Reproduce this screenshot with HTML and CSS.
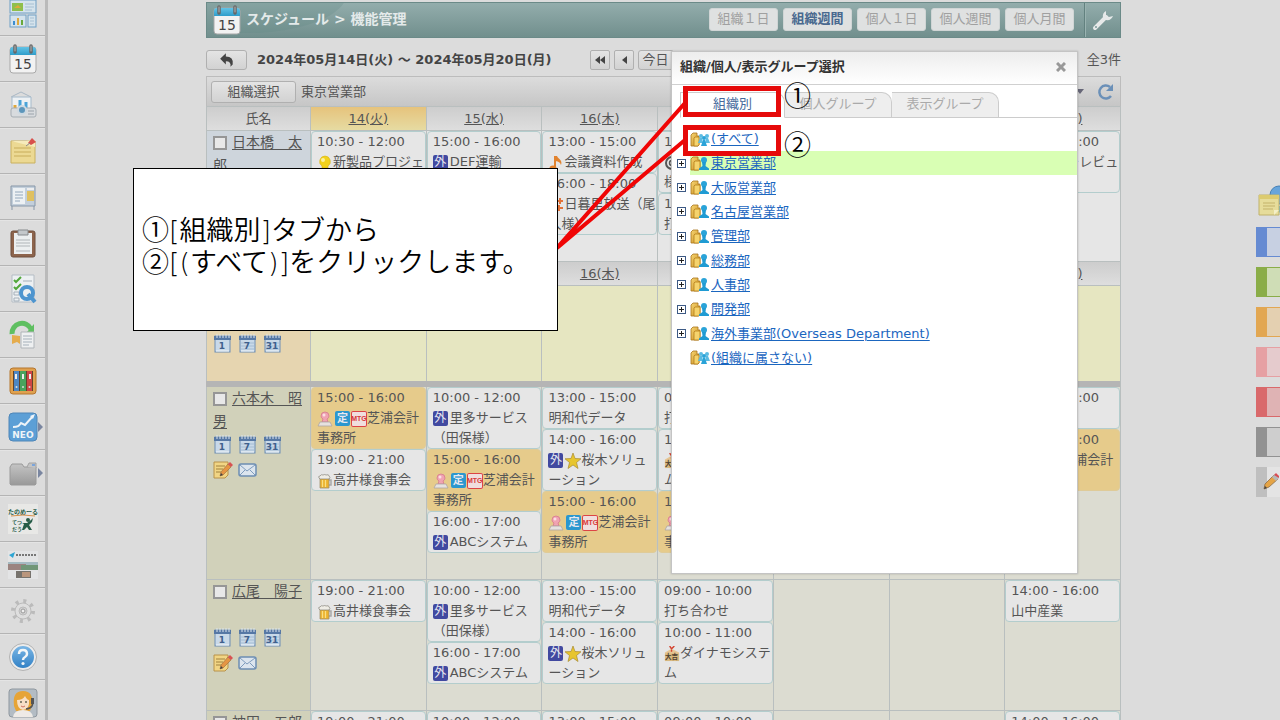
FILE: index.html
```html
<!DOCTYPE html>
<html lang="ja">
<head>
<meta charset="utf-8">
<title>スケジュール</title>
<link rel="stylesheet" href="styles.css">
</head>
<body>
<svg class="paints" aria-hidden="true">
  <defs>
    <linearGradient id="g-blue" x1="0" y1="0" x2="0" y2="1"><stop offset="0" stop-color="#7db8e6"/><stop offset="1" stop-color="#2f7fc4"/></linearGradient>
    <linearGradient id="g-sky" x1="0" y1="0" x2="0" y2="1"><stop offset="0" stop-color="#63c3e6"/><stop offset="1" stop-color="#2f9dca"/></linearGradient>
    <linearGradient id="g-gray" x1="0" y1="0" x2="0" y2="1"><stop offset="0" stop-color="#c4c4c4"/><stop offset="1" stop-color="#999"/></linearGradient>
    <linearGradient id="g-gold" x1="0" y1="0" x2="1" y2="1"><stop offset="0" stop-color="#f7d774"/><stop offset="1" stop-color="#c98a1c"/></linearGradient>
  </defs>
</svg>
<svg class="defs" aria-hidden="true">
  <symbol id="day" viewBox="0 0 28 30">
    <rect x="1" y="3" width="26" height="26" rx="3" fill="#f2f2f2" stroke="#a9a9a9"/>
    <path d="M1 11V6a3 3 0 0 1 3-3h20a3 3 0 0 1 3 3v5z" fill="url(#g-sky)"/>
    <path d="M6 2v6M22 2v6" stroke="#666" stroke-width="3.500" stroke-linecap="round"/><path d="M6 2v5M22 2v5" stroke="#b5b5b5" stroke-linecap="round"/>
    <text x="14" y="25" text-anchor="middle" font-size="14" fill="#444">15</text>
  </symbol>
  <symbol id="calbase" viewBox="0 0 17 19">
    <rect x="1" y="2" width="15" height="16" fill="#c9d9e8" stroke="#6c8db3"/>
    <path d="M0 2h17v4H0z" fill="#5678a5"/><path d="M3 0v4M6 0v4M9 0v4M12 0v4M15 0v4" stroke="#dbe4ee"/><path d="M2 17h13" stroke="#f0f5f8"/>
  </symbol>
  <symbol id="cal1" viewBox="0 0 17 19"><use href="#calbase"/><text x="8" y="15" text-anchor="middle" font-size="9" font-weight="bold" fill="#3f608d">1</text></symbol>
  <symbol id="cal7" viewBox="0 0 17 19"><use href="#calbase"/><path d="M2 9h13M2 12h13M2 15h13" stroke="#a5bdd4"/><text x="8" y="15" text-anchor="middle" font-size="9" font-weight="bold" fill="#3f608d">7</text></symbol>
  <symbol id="cal31" viewBox="0 0 17 19"><use href="#calbase"/><path d="M2 9h13M2 12h13M2 15h13" stroke="#a5bdd4"/><text x="8" y="15" text-anchor="middle" font-size="9" font-weight="bold" fill="#3f608d">31</text></symbol>
  <symbol id="memo" viewBox="0 0 20 18">
    <path d="M1 1h14v13l-3 3H1z" fill="#f1d584" stroke="#b8924b"/><path d="M3 5h9M3 8h7M3 11h5" stroke="#a1823f"/>
    <path d="M7 15l1-4 7-8 3 3-8 8z" fill="#e59543" stroke="#9b6a3b" stroke-width=".6"/><path d="M15 3l2-2 3 3-2 2z" fill="#d85252"/><path d="M7 15l1-3 2 2z" fill="#444"/>
  </symbol>
  <symbol id="mail" viewBox="0 0 19 14"><rect x="1" y="1" width="17" height="12" rx="2" fill="#dce5ee" stroke="#6c8db3" stroke-width="1.500"/><path d="M2 2l7 6 8-6M2 12l5-5M17 12l-5-5" fill="none" stroke="#7f9cbd"/></symbol>
  <symbol id="bulb" viewBox="0 0 16 16"><path d="M8 1a5.500 5.500 0 0 0-3 10v2h6v-2a5.500 5.500 0 0 0-3-10z" fill="#f2d21c" stroke="#d5b21b" stroke-width=".6"/><circle cx="6" cy="5" r="2" fill="#fbf1a0"/><path d="M6 13h4v2H6z" fill="#8b8b8b"/></symbol>
  <symbol id="note" viewBox="0 0 16 16"><path d="M7 1v12" stroke="#e2832f" stroke-width="2"/><ellipse cx="5" cy="13" rx="3.500" ry="2.500" fill="#e2832f"/><path d="M6 1h3c1 3 6 4 4 9-1-3-3-4-7-4z" fill="#e2832f"/></symbol>
  <symbol id="plus2" viewBox="0 0 16 16"><path d="M9 4h6M12 1v6M8 11h7M11 8v6M2 3h5M4 1v13" stroke="#e2733a" stroke-width="2"/></symbol>
  <symbol id="target" viewBox="0 0 16 16"><circle cx="8" cy="8" r="6" fill="none" stroke="#555" stroke-width="2"/><circle cx="8" cy="8" r="2.500" fill="none" stroke="#555" stroke-width="1.500"/></symbol>
  <symbol id="seal" viewBox="0 0 16 16"><path d="M4 5a4 4 0 0 1 8 0q0 2-2 3l1 3H5l1-3Q4 7 4 5z" fill="#f0a3b2" stroke="#d67a8e" stroke-width=".8"/><circle cx="7" cy="4" r="1.500" fill="#fbdde3"/><path d="M3 11h10l2 4H1z" fill="#e6e1df" stroke="#aca4a2" stroke-width=".8"/></symbol>
  <symbol id="beer" viewBox="0 0 16 16"><path d="M12 7h2v5h-2" fill="none" stroke="#a9a9a9" stroke-width="1.500"/><path d="M3 5h9v10H3z" fill="#edb22c" stroke="#9f8f6c" stroke-width=".8"/><path d="M5.500 7v7M8.500 7v7" stroke="#f9df84" stroke-width="1.300"/><path d="M2 5q-1-2 1-2 1-2 3-1 2-1 3 0 3-1 3 1 2 1 0 3H3z" fill="#efede6" stroke="#85827a" stroke-width=".7"/></symbol>
  <symbol id="star" viewBox="0 0 16 16"><path d="M8 0l2 5.500 6 .3-4.500 3.700 1.500 6L8 12l-5 3.500 1.500-6L0 5.800l6-.3z" fill="#e7c52e" stroke="#a98b32" stroke-width=".7"/></symbol>
  <symbol id="luck" viewBox="0 0 17 17"><path d="M1 7l7-4 8 4v9H1z" fill="#e6c592"/><path d="M1 8h15v8H1z" fill="#d8b97f"/><path d="M6 0l2 3 3-3M8 3v3" fill="none" stroke="#d44331" stroke-width="1.500"/><text x="8" y="14" text-anchor="middle" font-size="7" font-weight="bold" fill="#4f4131">大吉</text></symbol>
  <symbol id="org" viewBox="0 0 20 15"><path d="M1 3l2-2h5v3h2v9l-2 1H1z" fill="url(#g-gold)" stroke="#a8741c" stroke-width=".8"/><path d="M4 14V6l1-1h5v8l-1 1z" fill="#f5d36c" stroke="#b47d1a" stroke-width=".8"/><circle cx="14" cy="4" r="3" fill="#2aa3d8"/><path d="M12 6h4l-.5 4 3.500 2.500V14H9v-1.500l3.500-2.500z" fill="#1f9bd3"/></symbol>
  <symbol id="orgs" viewBox="0 0 20 15"><path d="M1 3l2-2h4v3h2v9l-1 1H1z" fill="url(#g-gold)" stroke="#a8741c" stroke-width=".8"/><path d="M4 14V6l1-1h4v8l-1 1z" fill="#f5d36c" stroke="#b47d1a" stroke-width=".8"/><g fill="#5bbbe2"><circle cx="11" cy="4" r="2"/><circle cx="17" cy="4" r="2"/><path d="M10 6h2l1 5H8zM16 6h2l2 5h-5z"/></g><circle cx="14" cy="6" r="2" fill="#2aa3d8"/><path d="M13 8h2l2 6h-6z" fill="#2aa3d8"/></symbol>
  <symbol id="pin-note" viewBox="0 0 28 30"><path d="M2 5h24v22H2z" fill="#ecd993" stroke="#c9b05f"/><path d="M2 5h15l9-1v7z" fill="#f6ebbb"/><path d="M5 12h17M5 16h17M5 20h17" stroke="#c8ad5b"/><path d="M19 7l4-5 4 4-5 3z" fill="#d8504c"/><path d="M17 10l4-3" stroke="#888"/></symbol>
</svg>

<div class="page">
  <nav class="side" aria-label="メニュー">
    <a href="#" class="item" aria-label="トップ"><svg width="28" height="32" viewBox="0 0 28 32"><g fill="#d5e3ec" stroke="#6f9fc5"><rect x="1" y="3" width="26" height="13"/><rect x="1" y="18" width="16" height="12"/><rect x="19" y="18" width="8" height="12"/></g><path d="M3 6h11v8H3z" fill="#8fbf4c"/><path d="M5 11l4-3 3 3z" fill="#e0a83a"/><path d="M16 7h9M16 10h9M16 13h7M21 21h4M21 24h4M21 27h4" stroke="#a6bfd2"/><path d="M5 28v-4" stroke="#3c8ed0" stroke-width="2"/><path d="M9 28v-7" stroke="#e0a83a" stroke-width="2"/><path d="M13 28v-5" stroke="#69a93b" stroke-width="2"/></svg></a>
    <a href="#" class="item" aria-label="スケジュール"><svg width="28" height="30"><use href="#day"/></svg></a>
    <a href="#" class="item" aria-label="設備予約"><svg width="28" height="30" viewBox="0 0 28 30"><path d="M2 7L12 2l10 5" fill="none" stroke="#a9b7c4"/><path d="M3 7h19v15H3z" fill="#edf1f4" stroke="#a5bacb"/><path d="M6 20v-5" stroke="#e0a83a" stroke-width="3"/><path d="M11 18V10" stroke="#4aa3d8" stroke-width="3"/><path d="M17 18v-6" stroke="#4aa3d8" stroke-width="3"/><rect x="2" y="18" width="25" height="9" rx="2" fill="#d8dbde" stroke="#a6adb3"/><circle cx="13" cy="20" r="4" fill="#5d96bb" stroke="#cdd9e2" stroke-width="2"/><path d="M19 21h6M19 24h6" stroke="#9aa2aa"/></svg></a>
    <a href="#" class="item" aria-label="伝言メモ"><svg width="28" height="30"><use href="#pin-note"/></svg></a>
    <a href="#" class="item" aria-label="掲示板"><svg width="28" height="30" viewBox="0 0 28 30"><path d="M2 4h24v20H2zM3 24v4M25 24v4" fill="#c3cfdb" stroke="#8797a8"/><path d="M4 6h12v16H4z" fill="#edf1f4"/><path d="M6 10h8M6 13h8M6 16h8M6 19h5" stroke="#94a8bc"/><path d="M18 9h7v10h-7z" fill="#dfc060"/><path d="M18 7h7" stroke="#eee" stroke-width="2"/></svg></a>
    <a href="#" class="item" aria-label="回覧板"><svg width="28" height="30" viewBox="0 0 28 30"><rect x="2" y="3" width="24" height="26" rx="2" fill="#8d644c" stroke="#6f4f3d"/><path d="M5 5h18v21H5z" fill="#eceff0"/><path d="M9 2h10v5H9z" fill="#c4c8cb" stroke="#868a8d"/><path d="M7 12h14M7 15h14M7 18h14M7 23h14" stroke="#b0b5b8"/></svg></a>
    <a href="#" class="item" aria-label="アンケート"><svg width="28" height="30" viewBox="0 0 28 30"><path d="M3 1h22v27H3z" fill="#edf0f2" stroke="#b5bdc5"/><path d="M5 6l2 2 5-5M5 13l2 2 5-5" fill="none" stroke="#52a83b" stroke-width="2"/><path d="M14 7h9M5 18h5v3H5zM5 24h5v3H5z" fill="none" stroke="#a5b0ba"/><circle cx="18" cy="19" r="6" fill="none" stroke="#4e95cf" stroke-width="4"/><path d="M19 20l7 8" stroke="#4e95cf" stroke-width="4"/></svg></a>
    <a href="#" class="item" aria-label="ワークフロー"><svg width="28" height="30" viewBox="0 0 28 30"><path d="M3 14A10 10 0 0 1 22 9" fill="none" stroke="#5fbf61" stroke-width="5"/><path d="M18 12l7 1V4z" fill="#5fbf61"/><path d="M3 15l8 1v8l-3-2-5 2z" fill="#e5ac4d"/><path d="M12 12h13v16H12z" fill="#eef0f1" stroke="#b0b5b9"/><path d="M14 16h9M14 19h9M14 22h9M14 25h6" stroke="#a5b0ba"/></svg></a>
    <a href="#" class="item" aria-label="キャビネット"><svg width="28" height="30" viewBox="0 0 28 30"><rect x="1" y="2" width="26" height="26" rx="3" fill="#dfa14f" stroke="#b5762e"/><path d="M4 5h20v20H4z" fill="#60442d"/><path d="M5 5h5v20H5z" fill="#4d87c4"/><path d="M11 5h6v20h-6z" fill="#4aa35d"/><path d="M18 5h5v20h-5z" fill="#cf4545"/><path d="M7 8v5M14 8v5M21 8v5" stroke="#eee" stroke-width="2"/><g fill="#ddd"><circle cx="7.500" cy="21" r="1"/><circle cx="14" cy="21" r="1"/><circle cx="20.500" cy="21" r="1"/></g></svg></a>
    <a href="#" class="item more" aria-label="NEO"><svg width="30" height="30" viewBox="0 0 30 30"><rect x="1" y="1" width="28" height="28" rx="4" fill="#5c9fd6" stroke="#4e86b8"/><path d="M5 15c5 0 6-1 8-4l4 2 8-9" fill="none" stroke="#eef4f8" stroke-width="2"/><path d="M27 2l-5 2 3 3z" fill="#eef4f8"/><text x="15" y="26" text-anchor="middle" font-size="9" font-weight="bold" fill="#eef4f8">NEO</text></svg></a>
    <a href="#" class="item more" aria-label="フォルダ"><svg width="28" height="26" viewBox="0 0 28 26"><path d="M1 7l2-3h10l2 3h12v17l-1 1H2l-1-1z" fill="url(#g-gray)" stroke="#9a9a9a"/><path d="M18 7l2-4h7v5" fill="#c4c4c4" stroke="#a2a2a2"/><path d="M23 4h3v2h-3z" fill="#7ba5dc"/></svg></a>
    <a href="#" class="item" aria-label="たのめーる"><svg width="30" height="30" viewBox="0 0 30 30"><path d="M0 0h30v30H0z" fill="#e8e8e6"/><text x="15" y="10" text-anchor="middle" font-size="6" font-weight="bold" fill="#265c47">たのめーる</text><path d="M3 12q12-2 24 0" fill="none" stroke="#d8914b"/><text x="9" y="20" text-anchor="middle" font-size="5" font-weight="bold" fill="#265c47">てつ</text><text x="9" y="27" text-anchor="middle" font-size="5" font-weight="bold" fill="#265c47">だう</text><circle cx="20" cy="16" r="2" fill="#265c47"/><path d="M14 19l5 0 4-3 2-2-1 4-3 3 3 5h-3l-2-3-3 3h-2l2-6z" fill="#265c47"/></svg></a>
    <a href="#" class="item" aria-label="販売管理"><svg width="30" height="30" viewBox="0 0 30 30"><path d="M0 1h30v28H0z" fill="#e3e4e5"/><path d="M1 5l6-3-2 6z" fill="#2da5d3"/><path d="M8 5h21" stroke="#777" stroke-width="2" stroke-dasharray="2 1"/><path d="M0 12h30v7H0z" fill="#a5bac1"/><path d="M0 14h18v6H0z" fill="#9b8480"/><path d="M13 15h17v5H13z" fill="#719677"/><path d="M8 21h15v7H8z" fill="#77736d"/><path d="M14 22h8v5h-8z" fill="#ba967d"/></svg></a>
    <a href="#" class="item" aria-label="設定"><svg width="28" height="28" viewBox="0 0 28 28"><circle cx="14" cy="14" r="10" fill="none" stroke="#bbb" stroke-width="4" stroke-dasharray="3 4.850"/><circle cx="14" cy="14" r="8" fill="#dedede" stroke="#bbb"/><circle cx="14" cy="14" r="4" fill="#d2d2d2" stroke="#bbb"/><circle cx="14" cy="14" r="2" fill="#eee" stroke="#999"/></svg></a>
    <a href="#" class="item" aria-label="ヘルプ"><svg width="28" height="28" viewBox="0 0 28 28"><circle cx="14" cy="14" r="12" fill="url(#g-blue)" stroke="#ececec" stroke-width="2"/><circle cx="14" cy="14" r="13.500" fill="none" stroke="#b3b3b3"/><path d="M10 11q0-4 4-4t4 4q0 2-2 3t-2 3" fill="none" stroke="#f2f6f8" stroke-width="2.500"/><circle cx="14" cy="20.500" r="1.600" fill="#f2f6f8"/></svg></a>
    <a href="#" class="item" aria-label="サポート"><svg width="30" height="30" viewBox="0 0 30 30"><rect x="1" y="1" width="28" height="28" rx="3" fill="#b3bcc4" stroke="#8f979f"/><path d="M6 18Q4 3 15 3t9 15l-2 5H8z" fill="#e6a437"/><path d="M9 12q6 0 8-4 2 4 4 4 1 9-6 10-6-1-6-10z" fill="#f7dfc6"/><path d="M5 29q1-7 10-7t10 7z" fill="#eeeae6"/><path d="M24 11q3 9-6 10" fill="none" stroke="#555" stroke-width="1.500"/><path d="M23 10h3v6h-3z" fill="#555"/><circle cx="13" cy="14" r="1" fill="#665"/><circle cx="18" cy="14" r="1" fill="#665"/><path d="M13 18q2 2 4 0" fill="none" stroke="#d07060"/></svg></a>
  </nav>

  <main class="main">
    <header class="topbar">
      <svg class="logo" width="28" height="30"><use href="#day"/></svg>
      <h1>スケジュール &gt; 機能管理</h1>
      <div class="views">
        <button>組織１日</button><button class="on">組織週間</button><button>個人１日</button><button>個人週間</button><button>個人月間</button>
      </div>
      <button class="wrench" aria-label="設定"><svg width="22" height="22" viewBox="0 0 22 22"><path d="M3 19L14 8" stroke="#e6e9e9" stroke-width="4" stroke-linecap="round"/><path d="M14 2q-4 2-3 7l3 2q5 1 7-4l-4 1-3-2z" fill="#e6e9e9"/><circle cx="4" cy="18" r="1" fill="#7b9a98"/></svg></button>
    </header>

    <div class="toolbar">
      <button class="btn back" aria-label="戻る"><svg width="16" height="16" viewBox="0 0 14 14"><path d="M6 1v3q7 0 6 7l-2 2q1-5-4-5v3L1 6z" fill="#444"/></svg></button>
      <h2>2024年05月14日(火) ～ 2024年05月20日(月)</h2>
      <div class="pager">
        <button class="btn sq" aria-label="前週"><svg width="12" height="8" viewBox="0 0 12 8"><path d="M6 0v8L1 4zM11 0v8L6 4z" fill="#444"/></svg></button>
        <button class="btn sq" aria-label="前日"><svg width="6" height="8" viewBox="0 0 6 8"><path d="M6 0v8L1 4z" fill="#444"/></svg></button>
        <button class="btn today">今日</button>
      </div>
      <span class="count">全3件</span>
    </div>

    <div class="panel">
      <button class="btn pick">組織選択</button>
      <span>東京営業部</span>
      <span class="tools">
        <svg width="8" height="5" viewBox="0 0 8 5"><path d="M0 0h8L4 5z" fill="#667"/></svg>
        <svg width="18" height="18" viewBox="0 0 18 18"><path d="M15 13A6.500 6.500 0 1 1 14 4" fill="none" stroke="#6b90b8" stroke-width="2.500"/><path d="M17 1v7h-7z" fill="#6b90b8"/></svg>
      </span>
    </div>

    <table class="week">
      <colgroup><col class="c-name"><col span="7"></colgroup>
      <tr class="head">
        <th>氏名</th><th class="now"><a href="#">14(火)</a></th><th><a href="#">15(水)</a></th><th><a href="#">16(木)</a></th><th><a href="#">17(金)</a></th><th><a href="#">18(土)</a></th><th><a href="#">19(日)</a></th><th><a href="#">20(月)</a></th>
      </tr>
      <tr class="me">
        <td class="name"><div class="who"><input type="checkbox" id="u1" aria-label="日本橋 太郎"><a href="#">日本橋　太郎</a></div></td>
        <td><div class="ev">10:30 - 12:00<br><svg class="i"><use href="#bulb"/></svg>新製品プロジェクト会議</div></td>
        <td><div class="ev">15:00 - 16:00<br><span class="tag out">外</span>DEF運輸</div></td>
        <td><div class="ev">13:00 - 15:00<br><svg class="i"><use href="#note"/></svg>会議資料作成</div><div class="ev">16:00 - 18:00<br><svg class="i"><use href="#plus2"/></svg>日暮里放送（尾久様）</div></td>
        <td><div class="ev">13:00 - 14:00<br><svg class="i"><use href="#target"/></svg>千代田商事<br>様</div><div class="ev">15:00 - 16:00<br>打ち合わせ</div></td>
        <td></td><td></td>
        <td><div class="ev">16:00 - 17:00<br><svg class="i"><use href="#target"/></svg>メンバーレビュー</div></td>
      </tr>
      <tr class="head">
        <th>氏名</th><th class="now"><a href="#">14(火)</a></th><th><a href="#">15(水)</a></th><th><a href="#">16(木)</a></th><th><a href="#">17(金)</a></th><th><a href="#">18(土)</a></th><th><a href="#">19(日)</a></th><th><a href="#">20(月)</a></th>
      </tr>
      <tr class="group">
        <td class="name"><div class="who"><a href="#">東京営業部</a></div><div class="links"><a href="#" aria-label="日"><svg width="17" height="19"><use href="#cal1"/></svg></a><a href="#" aria-label="週"><svg width="17" height="19"><use href="#cal7"/></svg></a><a href="#" aria-label="月"><svg width="17" height="19"><use href="#cal31"/></svg></a></div></td>
        <td></td><td></td><td></td><td></td><td></td><td></td><td></td>
      </tr>
      <tr class="gap"><td colspan="8"></td></tr>
      <tr class="first">
        <td class="name"><div class="who"><input type="checkbox" id="u2" aria-label="六本木 昭男"><a href="#">六本木　昭男</a></div><div class="links"><a href="#" aria-label="日"><svg width="17" height="19"><use href="#cal1"/></svg></a><a href="#" aria-label="週"><svg width="17" height="19"><use href="#cal7"/></svg></a><a href="#" aria-label="月"><svg width="17" height="19"><use href="#cal31"/></svg></a></div><div class="links"><a href="#" aria-label="メモ"><svg width="20" height="18"><use href="#memo"/></svg></a><a href="#" aria-label="メール"><svg width="19" height="14"><use href="#mail"/></svg></a></div></td>
        <td><div class="ev hot">15:00 - 16:00<br><svg class="i seal"><use href="#seal"/></svg><span class="tag fix">定</span><span class="tag mtg">MTG</span>芝浦会計事務所</div><div class="ev">19:00 - 21:00<br><svg class="i"><use href="#beer"/></svg>高井様食事会</div></td>
        <td><div class="ev">10:00 - 12:00<br><span class="tag out">外</span>里多サービス<br>（田保様）</div><div class="ev hot">15:00 - 16:00<br><svg class="i seal"><use href="#seal"/></svg><span class="tag fix">定</span><span class="tag mtg">MTG</span>芝浦会計事務所</div><div class="ev">16:00 - 17:00<br><span class="tag out">外</span>ABCシステム</div></td>
        <td><div class="ev">13:00 - 15:00<br>明和代データ</div><div class="ev">14:00 - 16:00<br><span class="tag out">外</span><svg class="i"><use href="#star"/></svg>桜木ソリューション</div><div class="ev hot">15:00 - 16:00<br><svg class="i seal"><use href="#seal"/></svg><span class="tag fix">定</span><span class="tag mtg">MTG</span>芝浦会計事務所</div></td>
        <td><div class="ev">09:00 - 10:00<br>打ち合わせ</div><div class="ev">10:00 - 11:00<br><svg class="i"><use href="#luck"/></svg>ダイナモシステム</div><div class="ev hot">15:00 - 16:00<br><svg class="i seal"><use href="#seal"/></svg><span class="tag fix">定</span><span class="tag mtg">MTG</span>芝浦会計事務所</div></td>
        <td></td><td></td>
        <td><div class="ev">14:00 - 16:00<br>山中産業</div><div class="ev hot">15:00 - 16:00<br><svg class="i seal"><use href="#seal"/></svg><span class="tag fix">定</span><span class="tag mtg">MTG</span>芝浦会計事務所</div></td>
      </tr>
      <tr class="other">
        <td class="name"><div class="who"><input type="checkbox" id="u3" aria-label="広尾 陽子"><a href="#">広尾　陽子</a></div><div class="links"><a href="#" aria-label="日"><svg width="17" height="19"><use href="#cal1"/></svg></a><a href="#" aria-label="週"><svg width="17" height="19"><use href="#cal7"/></svg></a><a href="#" aria-label="月"><svg width="17" height="19"><use href="#cal31"/></svg></a></div><div class="links"><a href="#" aria-label="メモ"><svg width="20" height="18"><use href="#memo"/></svg></a><a href="#" aria-label="メール"><svg width="19" height="14"><use href="#mail"/></svg></a></div></td>
        <td><div class="ev">19:00 - 21:00<br><svg class="i"><use href="#beer"/></svg>高井様食事会</div></td>
        <td><div class="ev">10:00 - 12:00<br><span class="tag out">外</span>里多サービス<br>（田保様）</div><div class="ev">16:00 - 17:00<br><span class="tag out">外</span>ABCシステム</div></td>
        <td><div class="ev">13:00 - 15:00<br>明和代データ</div><div class="ev">14:00 - 16:00<br><span class="tag out">外</span><svg class="i"><use href="#star"/></svg>桜木ソリューション</div></td>
        <td><div class="ev">09:00 - 10:00<br>打ち合わせ</div><div class="ev">10:00 - 11:00<br><svg class="i"><use href="#luck"/></svg>ダイナモシステム</div></td>
        <td></td><td></td>
        <td><div class="ev">14:00 - 16:00<br>山中産業</div></td>
      </tr>
      <tr class="other">
        <td class="name"><div class="who"><input type="checkbox" id="u4" aria-label="神田 五郎"><a href="#">神田　五郎</a></div></td>
        <td><div class="ev">19:00 - 21:00<br><svg class="i"><use href="#beer"/></svg>高井様食事会</div></td>
        <td><div class="ev">10:00 - 12:00<br><span class="tag out">外</span>里多サービス</div></td>
        <td><div class="ev">13:00 - 15:00<br>明和代データ</div></td>
        <td><div class="ev">09:00 - 10:00<br>打ち合わせ</div></td>
        <td></td><td></td>
        <td><div class="ev">14:00 - 16:00<br>山中産業</div></td>
      </tr>
    </table>
  </main>

  <aside class="stickers" aria-label="付箋">
    <svg class="sticky" width="24" height="34" viewBox="0 0 24 34"><circle cx="23" cy="11" r="9" fill="#67a5dc" stroke="#4580b5"/><path d="M16 26q6 5 8 2v-6h-8z" fill="#63b5d8"/><path d="M3 11h20v20H3z" fill="#e6dc9a" stroke="#c0b26b"/><path d="M3 11h20v4H3z" fill="#dccb70"/><path d="M7 19h12M7 22h12M7 25h10" stroke="#c3b26b"/><path d="M18 31v-5h5z" fill="#f4efc6"/></svg>
    <button class="chip blue" aria-label="青"></button>
    <button class="chip green" aria-label="緑"></button>
    <button class="chip orange" aria-label="橙"></button>
    <button class="chip pink" aria-label="桃"></button>
    <button class="chip red" aria-label="赤"></button>
    <button class="chip gray" aria-label="灰"></button>
    <button class="chip edit" aria-label="編集"><svg width="16" height="18" viewBox="0 0 16 18"><path d="M1 16l1-5 9-9 4 4-9 8z" fill="#e5a446" stroke="#8d6c45" stroke-width=".8"/><path d="M9 4l3-3 4 4-3 3z" fill="#b7b7b7"/><path d="M11 2l2-2 3 3v2z" fill="#d94c52"/><path d="M1 16l1-3 2 2z" fill="#444"/></svg></button>
  </aside>
</div>

<section class="dialog" role="dialog" aria-labelledby="dlg">
  <header><h3 id="dlg">組織/個人/表示グループ選択</h3><button aria-label="閉じる"><svg width="10" height="10" viewBox="0 0 10 10"><path d="M1 1l8 8M9 1L1 9" stroke="#999" stroke-width="3"/></svg></button></header>
  <div class="tabs"><button class="on">組織別</button><button>個人グループ</button><button>表示グループ</button></div>
  <ul class="tree">
    <li><svg class="o"><use href="#orgs"/></svg><a href="#">(すべて)</a></li>
    <li class="sel"><button aria-label="開く"></button><svg class="o"><use href="#org"/></svg><a href="#">東京営業部</a></li>
    <li><button aria-label="開く"></button><svg class="o"><use href="#org"/></svg><a href="#">大阪営業部</a></li>
    <li><button aria-label="開く"></button><svg class="o"><use href="#org"/></svg><a href="#">名古屋営業部</a></li>
    <li><button aria-label="開く"></button><svg class="o"><use href="#org"/></svg><a href="#">管理部</a></li>
    <li><button aria-label="開く"></button><svg class="o"><use href="#org"/></svg><a href="#">総務部</a></li>
    <li><button aria-label="開く"></button><svg class="o"><use href="#org"/></svg><a href="#">人事部</a></li>
    <li><button aria-label="開く"></button><svg class="o"><use href="#org"/></svg><a href="#">開発部</a></li>
    <li><button aria-label="開く"></button><svg class="o"><use href="#org"/></svg><a href="#">海外事業部(Overseas Department)</a></li>
    <li><svg class="o"><use href="#orgs"/></svg><a href="#">(組織に属さない)</a></li>
  </ul>
</section>

<svg class="lines" width="132" height="150" viewBox="0 0 132 150"><path d="M129 3L1 148L129 40" fill="none" stroke="#f00505" stroke-width="4"/></svg>
<p class="callout">①[組織別]タブから<br>②[(すべて)]をクリックします。</p>
<div class="mark m1"></div><div class="mark m2"></div>
<span class="num n1">①</span><span class="num n2">②</span>
</body>
</html>
```

FILE: styles.css
```css
* { box-sizing: border-box; }
body {
  margin: 0;
  position: relative;
  height: 100vh;
  overflow: hidden;
  background: #dcdcdc;
  color: #555;
  font: 13px/20px "DejaVu Sans", "Noto Sans CJK JP", sans-serif;
}
button { font: inherit; color: inherit; padding: 0; margin: 0; border: 0; background: none; }
h1, h2, h3, p, ul { margin: 0; padding: 0; }
a { color: inherit; }
svg { display: block; flex: none; }
.defs { display: none; }
.paints { position: absolute; width: 0; height: 0; }
.page { display: grid; grid-template-columns: 48px 1fr 24px; height: 100%; overflow: hidden; }

/* left menu */
.side { border-right: 3px solid #bababa; margin-top: -10px; display: flex; flex-direction: column; }
.item { flex: none; height: 46px; border-bottom: 1px solid #b4b4b4; border-top: 1px solid #e4e4e4; display: flex; align-items: center; justify-content: center; position: relative; }
.more::after { content: ""; position: absolute; right: 2px; top: 17px; border: 5px solid transparent; border-left-color: #7a86a0; border-right: 0; }

/* header */
.main { padding: 2px 135px 0 158px; min-width: 0; }
.topbar { height: 36px; border: 1px solid #6b8a88; background: linear-gradient(#93adac, #718f8d); display: flex; align-items: center; position: relative; overflow: hidden; }
.topbar::before { content: ""; position: absolute; left: -60px; top: -50px; width: 200px; height: 80px; border-radius: 50%; background: #5f868440; }
.logo { margin: 0 5px 0 6px; position: relative; }
.topbar h1 { font-size: 14px; color: #e4eaea; flex: 1; position: relative; padding-bottom: 2px; }
.views { display: flex; gap: 5px; margin: 0 10px 2px 0; }
.views button { width: 69px; height: 23px; border-radius: 3px; background: #dfe1e1; border: 1px solid #d0d5d5; color: #a0a0a0; padding-bottom: 2px; }
.views .on { color: #49698f; font-weight: bold; }
.wrench { align-self: stretch; width: 36px; border-left: 1px solid #62817f; box-shadow: inset 1px 0 #9ab3b1; display: grid; place-items: center; }

.toolbar { display: flex; align-items: center; height: 32px; margin: 6px 0 0; }
.btn { border: 1px solid #b0b0b0; border-radius: 3px; background: linear-gradient(#e4e4e4, #d2d2d2); display: inline-flex; align-items: center; justify-content: center; }
.back { width: 41px; height: 20px; }
.toolbar h2 { font-size: 13px; color: #444; margin-left: 10px; }
.pager { display: flex; gap: 4px; margin-left: 38px; }
.sq { width: 20px; height: 20px; border-radius: 2px; }
.today { width: 36px; height: 20px; }
.count { margin-left: auto; }

.panel { height: 30px; border: 1px solid #bcbcbc; border-bottom: 0; background: linear-gradient(#dcdcdc, #c6c6c6); display: flex; align-items: center; gap: 5px; padding: 0 6px 0 4px; }
.pick { width: 85px; height: 22px; }
.tools { margin-left: auto; display: flex; align-items: center; gap: 12px; }

/* week table */
.week { width: 100%; table-layout: fixed; border-collapse: separate; border-spacing: 0; border-right: 1px solid #b9bfbf; }
.c-name { width: 104px; }
.week td, .week th { padding: 0; border-left: 1px solid #b9bfbf; border-top: 1px solid #b9bfbf; vertical-align: top; font-weight: normal; }
.head th { height: 24px; vertical-align: middle; line-height: 22px; background: linear-gradient(#cdcdcd, #dedede); }
.head .now { background: linear-gradient(#e6c37c, #e6dba2); }
.week td.name { padding: 0 4px 0 6px; }
.me td { height: 131px; background: #e6e6e6; }
.me td.name { background: #ced5dc; }
.group td { height: 96px; background: #e6e6c1; }
.group td.name { background: #e6d5b0; }
.week .gap td { height: 6px; background: #b5b5b5; border: 0; }
.first td, .other td { background: #dcdcd1; }
.first td.name, .other td.name { background: #d1d1ba; }
.week .first td { height: 192px; border-top: 0; }
.other td { height: 131px; }
.who { height: 45px; line-height: 23px; font-size: 14px; line-break: anywhere; }
.who a { text-decoration-thickness: 1px; text-underline-offset: 2px; }
.who input { appearance: none; width: 14px; height: 14px; margin: 0 5px 0 0; border: 2px solid #969696; background: #e8e8e8; vertical-align: -3px; }
.links { display: flex; align-items: center; gap: 8px; height: 25px; padding-left: 1px; }
.links + .links { gap: 5px; padding-left: 0; }
.ev { border: 1px solid #b3cdcd; border-radius: 4px; background: #e6e6e6; padding-left: 5px; line-break: anywhere; }
.me .ev:only-child { min-height: 62px; }
.hot { background: #e6cb8b; border-color: #dfcb98; }
.i { display: inline-block; width: 16px; height: 16px; vertical-align: top; margin-top: 3px; }
.seal { margin-right: 2px; }
.tag { display: inline-block; width: 15px; height: 15px; line-height: 15px; font-size: 12px; text-align: center; color: #e8e8f0; margin: 3px 2px 0 0; vertical-align: top; border-radius: 2px; }
.out { background: #4149a0; }
.fix { background: #2b97cf; margin-right: 1px; font-weight: bold; font-size: 11px; }
.mtg { width: 16px; height: 16px; box-shadow: inset 0 0 0 1px #dc4545; background: #f0dede; color: #d83838; font: bold 7px/16px "Liberation Sans", sans-serif; margin-right: 0; }

/* stickers */
.stickers { padding-top: 184px; display: flex; flex-direction: column; gap: 10px; }
.sticky { margin-bottom: -1px; }
.chip { height: 30px; border: 1px solid; border-left-width: 11px; border-right: 0; }
.blue { border-color: #668bd2; background: #c7d0e2; }
.green { border-color: #8aad48; background: #cfddb6; }
.orange { border-color: #e2a752; background: #e4d0b1; }
.pink { border-color: #e6a0a3; background: #e5cbcd; }
.red { border-color: #d9696b; background: #dfb3b4; }
.gray { border-color: #929292; background: #cecece; }
.edit { border-color: #bfbfbf; background: #e4e4e4; border-top: 0; border-bottom: 0; }
.edit svg { position: relative; left: -4px; }

/* organisation dialog */
.dialog { position: absolute; left: 671px; top: 51px; width: 407px; height: 523px; background: #fff; border: 1px solid #c4c4c4; box-shadow: 0 0 2px #0003; }
.dialog header { height: 33px; padding: 0 11px 2px 8px; display: flex; align-items: center; justify-content: space-between; border-bottom: 1px solid #d0d0d0; background: linear-gradient(#ededed, #fff); }
.dialog h3 { font-size: 13px; color: #333; }
.tabs { display: flex; height: 26px; margin: 7px 0 0 8px; color: #aaa; }
.tabs::after { content: ""; flex: 1; border-bottom: 1px solid #ccc; }
.tabs button { width: 107px; border: 1px solid #ccc; border-left: 0; border-radius: 0 10px 0 0; background: #eee; padding-bottom: 3px; }
.tabs .on { width: 105px; border-left: 1px solid #ccc; border-bottom-color: #fff; background: #fff; color: #45699c; }
.tree { list-style: none; margin-top: 9px; min-height: 243px; display: flex; flex-direction: column; justify-content: space-between; }
.tree li { height: 24px; display: flex; align-items: center; padding-left: 18px; position: relative; color: #1b66bf; }
.tree .sel { background: linear-gradient(#d9ffb4, #d9ffb4) 18px 0 no-repeat; }
.tree a { text-underline-offset: 2px; text-decoration-thickness: 1px; }
.tree button { width: 9px; height: 9px; margin: 0 4px 0 -13px; border: 1px solid #3d5a85; background: linear-gradient(#222, #222) center / 5px 1px no-repeat, linear-gradient(#222, #222) center / 1px 5px no-repeat, #fff; }
.o { width: 20px; height: 15px; margin-right: 1px; }

/* annotations */
.callout { position: absolute; left: 133px; top: 168px; width: 425px; height: 163px; border: 1px solid #000; background: #fff; color: #000; padding: 46px 8px 0; font: 350 27px/32px "DejaVu Sans", "Noto Sans CJK JP", sans-serif; white-space: nowrap; }
.lines { position: absolute; left: 556px; top: 100px; }
.mark { position: absolute; left: 683px; width: 98px; height: 31px; border: 5px solid #e60a0a; }
.m1 { top: 86px; }
.m2 { top: 125px; }
.num { position: absolute; left: 784px; font: 350 27px/30px "Noto Sans CJK JP", sans-serif; color: #000; }
.n1 { top: 80px; }
.n2 { top: 129px; }
```
